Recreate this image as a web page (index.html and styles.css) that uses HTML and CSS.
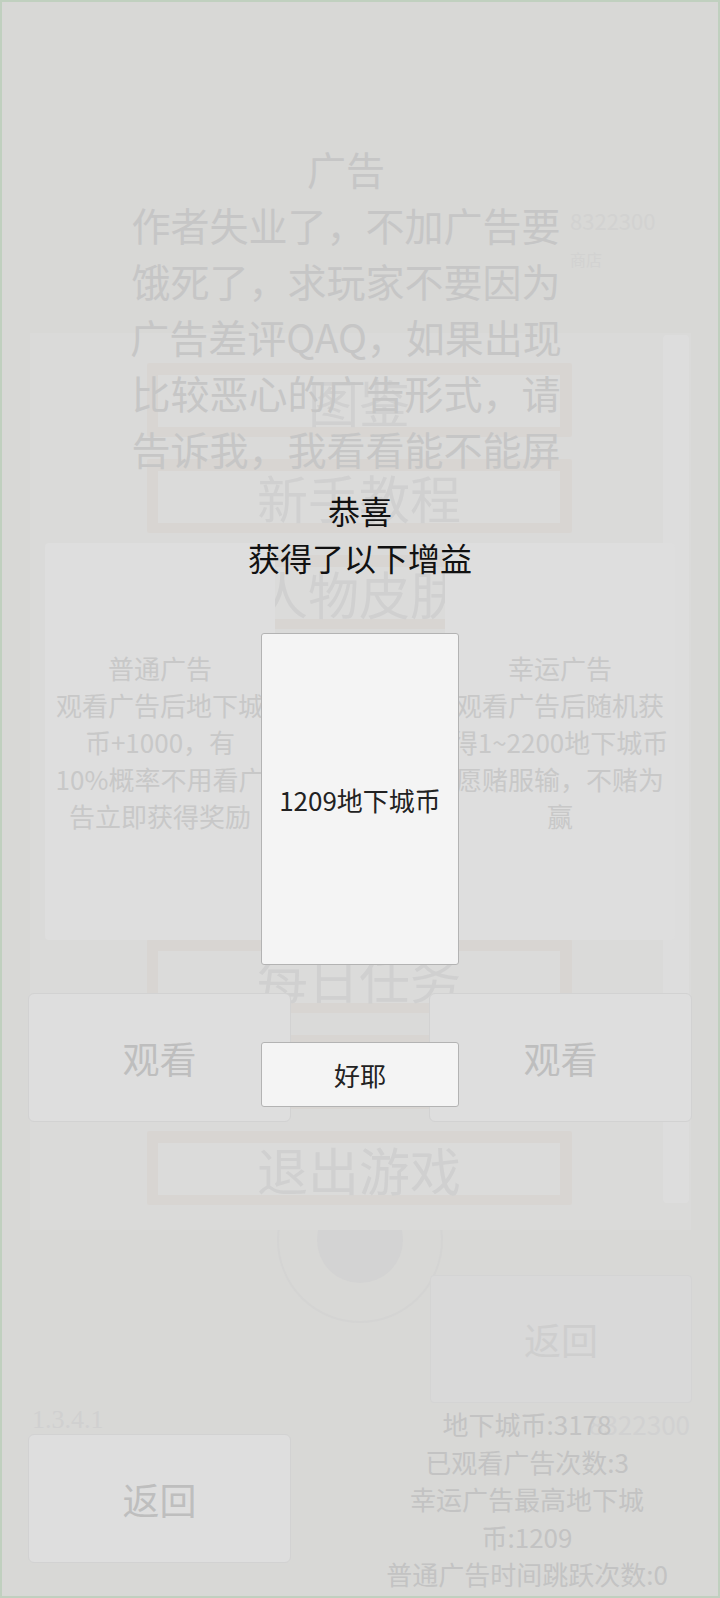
FILE: index.html
```html
<!DOCTYPE html>
<html lang="zh-CN">
<head>
<meta charset="utf-8">
<title>广告</title>
<link rel="stylesheet" href="styles.css">
</head>
<body>
<div class="screen">

  <div class="layer layer-skin">
    <div class="skin-top">
      <div class="skin-coins">8322300</div>
      <div class="skin-label">商店</div>
    </div>
    <div class="avatar"><div class="avatar-head"></div></div>
    <div class="skin-back">返回</div>
    <div class="skin-total">8322300</div>
  </div>

  <div class="layer layer-menu">
    <div class="menu-panel">
      <div class="menu-list">
        <div class="menu-btn"><div class="menu-btn-inner">图鉴</div></div>
        <div class="menu-btn"><div class="menu-btn-inner">新手教程</div></div>
        <div class="menu-btn"><div class="menu-btn-inner">人物皮肤</div></div>
        <div class="menu-btn"><div class="menu-btn-inner">商城</div></div>
        <div class="menu-btn"><div class="menu-btn-inner">排行榜</div></div>
        <div class="menu-btn"><div class="menu-btn-inner">设置</div></div>
        <div class="menu-btn"><div class="menu-btn-inner">每日任务</div></div>
        <div class="menu-btn"><div class="menu-btn-inner">成就</div></div>
        <div class="menu-btn"><div class="menu-btn-inner">退出游戏</div></div>
      </div>
      <div class="menu-scroll"></div>
    </div>
  </div>

  <div class="layer layer-ad">
    <div class="ad-text">
      广告<br>
      作者失业了，不加广告要<br>
      饿死了，求玩家不要因为<br>
      广告差评QAQ，如果出现<br>
      比较恶心的广告形式，请<br>
      告诉我，我看看能不能屏<br>
      蔽
    </div>
    <div class="ad-cards">
      <div class="ad-card">普通广告<br>观看广告后地下城<br>币+1000，有<br>10%概率不用看广<br>告立即获得奖励</div>
      <div class="ad-card">幸运广告<br>观看广告后随机获<br>得1~2200地下城币<br>愿赌服输，不赌为<br>赢</div>
    </div>
    <div class="ad-watch">
      <div class="ghost-btn">观看</div>
      <div class="ghost-btn">观看</div>
    </div>
    <div class="ad-bottom">
      <div class="ad-left">
        <div class="version">1.3.4.1</div>
        <div class="ghost-btn back-btn">返回</div>
      </div>
      <div class="ad-stats">地下城币:3178<br>已观看广告次数:3<br>幸运广告最高地下城<br>币:1209<br>普通广告时间跳跃次数:0</div>
    </div>
  </div>

  <div class="layer layer-dialog">
    <div class="dlg-title">恭喜<br>获得了以下增益</div>
    <div class="dlg-box">1209地下城币</div>
    <div class="dlg-btn">好耶</div>
  </div>

</div>
</body>
</html>
```

FILE: styles.css
```css
html, body {
  margin: 0;
  padding: 0;
  background: #d8d8d6;
}

.screen {
  position: relative;
  width: 720px;
  height: 1598px;
  overflow: hidden;
  background: #d8d8d6;
  box-shadow: inset 0 0 0 2px #c0d0bf;
  font-family: "Noto Sans CJK SC", "Noto Sans", sans-serif;
}

.layer {
  position: absolute;
  inset: 0;
  display: flex;
  flex-direction: column;
}

/* ---------- deepest layer (skin screen) ---------- */
.layer-skin {
  padding: 208px 0 0 0;
}

.skin-top {
  align-self: flex-start;
  margin-left: 570px;
  color: #d2d2d1;
}

.skin-coins {
  font-size: 22px;
  line-height: 24px;
}

.skin-label {
  margin-top: 18px;
  font-size: 16px;
  line-height: 18px;
}

.avatar {
  align-self: flex-start;
  margin-top: 889px;
  margin-left: 277px;
  width: 166px;
  height: 166px;
  box-sizing: border-box;
  border: 2px solid #d4d4d3;
  border-radius: 50%;
}

.avatar-head {
  width: 86px;
  height: 86px;
  margin: 38px auto 0;
  border-radius: 50%;
  background: #d3d3d3;
}

.skin-back {
  align-self: flex-end;
  margin-right: 28px;
  margin-top: -48px;
  width: 262px;
  height: 128px;
  box-sizing: border-box;
  border: 1px solid #d4d4d4;
  border-radius: 4px;
  background: #d9d9d9;
  display: flex;
  align-items: center;
  justify-content: center;
  font-size: 37px;
  color: #cecece;
}

.skin-total {
  align-self: flex-end;
  margin-right: 30px;
  margin-top: 2px;
  font-size: 26px;
  line-height: 37px;
  color: #d1d1d1;
}

/* ---------- main menu layer ---------- */
.menu-panel {
  margin-top: 333px;
  margin-left: 30px;
  width: 661px;
  height: 897px;
  box-sizing: border-box;
  background: #dadad9;
  display: flex;
}

.menu-list {
  flex: 1;
  display: flex;
  flex-direction: column;
  gap: 22px;
  padding: 30px 0 0 117px;
}

.menu-btn {
  width: 425px;
  height: 74px;
  box-sizing: border-box;
  padding: 12px 12px 10px 11px;
  background: #d8d5d2;
  border-radius: 2px;
}

.menu-btn-inner {
  height: 100%;
  background: #dbdbda;
  display: flex;
  align-items: center;
  justify-content: center;
  font-size: 51px;
  line-height: 1;
  color: #d0d0d0;
  white-space: nowrap;
}

.menu-scroll {
  width: 26px;
  margin: 2px 2px 27px 0;
  background: #dddddd;
  border-radius: 4px;
}

/* ---------- ad screen layer ---------- */
.layer-ad {
  padding-top: 140px;
}

.ad-text {
  width: 440px;
  height: 336px;
  margin-left: 126px;
  overflow: hidden;
  font-size: 39px;
  line-height: 56px;
  text-align: center;
  white-space: nowrap;
  color: #c6c6c6;
}

.ad-cards {
  margin-top: 67px;
  height: 397px;
  display: flex;
  gap: 170px;
  padding-left: 45px;
}

.ad-card {
  width: 230px;
  background: #dedede;
  border-radius: 4px;
  display: flex;
  align-items: center;
  justify-content: center;
  text-align: center;
  white-space: nowrap;
  font-size: 26px;
  line-height: 37px;
  color: #c8c8c8;
}

.ad-watch {
  margin-top: 53px;
  height: 129px;
  display: flex;
  gap: 138px;
  padding-left: 28px;
}

.ghost-btn {
  width: 263px;
  height: 129px;
  box-sizing: border-box;
  border: 1px solid #d2d2d2;
  border-radius: 6px;
  background: #dedede;
  display: flex;
  align-items: center;
  justify-content: center;
  font-size: 37px;
  color: #bebebe;
}

.ad-bottom {
  margin-top: 283px;
  display: flex;
}

.ad-left {
  margin-left: 28px;
  width: 263px;
}

.version {
  padding-left: 4px;
  height: 29px;
  font-family: "Liberation Serif", serif;
  font-size: 26px;
  line-height: 29px;
  color: #d0d0d0;
}

.ad-stats {
  margin-left: 73px;
  width: 326px;
  text-align: center;
  white-space: nowrap;
  font-size: 26px;
  line-height: 37.5px;
  color: #c3c3c3;
}

/* ---------- dialog layer ---------- */
.layer-dialog {
  padding-top: 487px;
  align-items: center;
}

.dlg-title {
  font-size: 32px;
  line-height: 47px;
  text-align: center;
  color: #111111;
}

.dlg-box {
  margin-top: 52px;
  width: 198px;
  height: 332px;
  box-sizing: border-box;
  border: 1px solid #b3b3b3;
  border-radius: 3px;
  background: #f4f4f4;
  display: flex;
  align-items: center;
  justify-content: center;
  font-size: 26px;
  color: #222222;
  white-space: nowrap;
}

.dlg-btn {
  margin-top: 77px;
  width: 198px;
  height: 65px;
  box-sizing: border-box;
  border: 1px solid #b3b3b3;
  border-radius: 3px;
  background: #f4f4f4;
  display: flex;
  align-items: center;
  justify-content: center;
  font-size: 26px;
  color: #222222;
}
```
